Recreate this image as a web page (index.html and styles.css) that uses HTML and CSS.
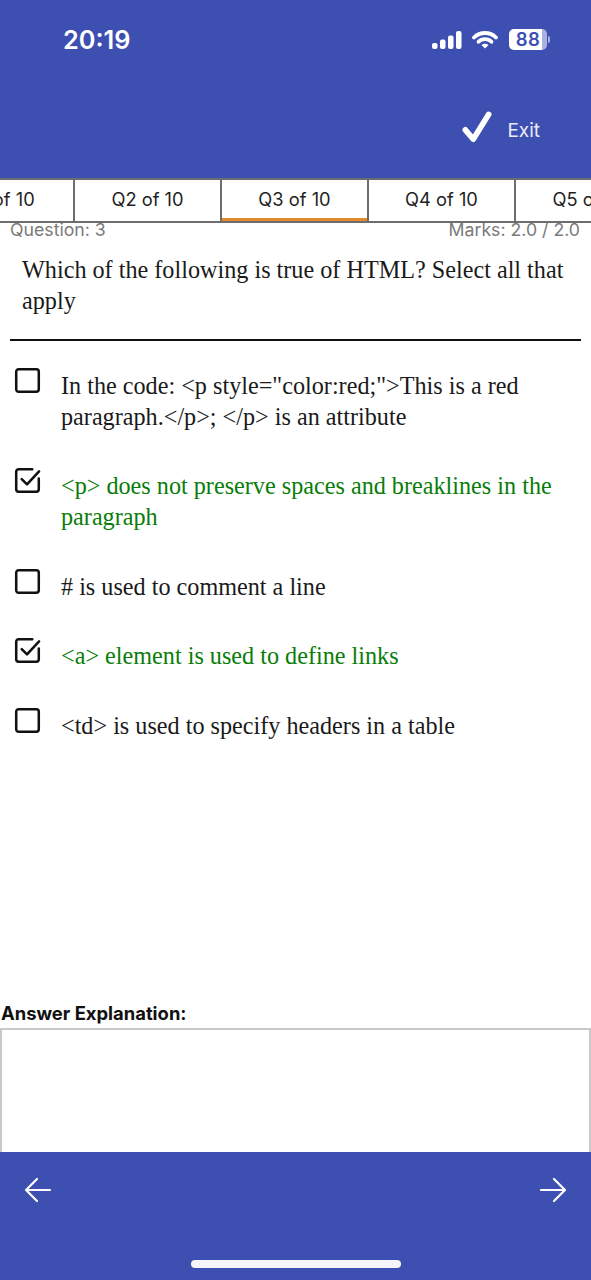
FILE: index.html
```html
<!DOCTYPE html>
<html lang="en">
<head>
<meta charset="utf-8">
<title>Quiz review</title>
<link rel="stylesheet" href="styles.css">
</head>
<body>
<div class="screen">
  <header class="header">
    <div class="status">
      <span class="time">20:19</span>
      <div class="status-icons">
        <svg class="signal" width="31" height="20" viewBox="0 0 31 20"><rect x="1" y="13" width="5.500" height="6" rx="2" fill="#fff"/><rect x="9" y="9.500" width="5.500" height="9.500" rx="2" fill="#fff"/><rect x="17" y="5.500" width="5.500" height="13.500" rx="2" fill="#fff"/><rect x="25" y="1" width="5.500" height="18" rx="2" fill="#fff"/></svg>
        <svg class="wifi" width="26" height="20" viewBox="0 0 26 20" fill="none" stroke="#fff" stroke-width="3.800" stroke-linecap="round"><path d="M2 7.500C8 1.500 18 1.500 24 7.500"/><path d="M6.500 11.800C10 8.200 16 8.200 19.500 11.800"/><path d="M13 18.500l-3.500-3.500c1.800-1.800 5.200-1.800 7 0z" fill="#fff" stroke="none"/></svg>
        <div class="battery"><span class="battery-level">88</span><span class="battery-cap"></span></div>
      </div>
    </div>
    <div class="actions">
      <svg class="check" width="30" height="34" viewBox="0 0 32 34" fill="none" stroke="#fff" stroke-width="6" stroke-linecap="round" stroke-linejoin="round"><path d="M3.500 20L12 30L28.500 3.500"/></svg>
      <span class="exit">Exit</span>
    </div>
  </header>

  <nav class="tabs">
    <div class="tab">Q1 of 10</div>
    <div class="tab">Q2 of 10</div>
    <div class="tab tab-active">Q3 of 10</div>
    <div class="tab">Q4 of 10</div>
    <div class="tab">Q5 of 10</div>
  </nav>

  <div class="meta">
    <span>Question: 3</span>
    <span>Marks: 2.0 / 2.0</span>
  </div>

  <main class="question">
    <p class="prompt">Which of the following is true of HTML? Select all that apply</p>
    <hr class="rule">
    <ul class="options">
      <li class="option">
        <svg class="box" width="27" height="27" viewBox="0 0 28 28" fill="none" stroke="#111" stroke-width="2.600" stroke-linejoin="round"><rect x="2.300" y="2.300" width="23.400" height="23.400" rx="2.500"/></svg>
        <span class="option-text">In the code: &lt;p style="color:red;"&gt;This is a red paragraph.&lt;/p&gt;; &lt;/p&gt; is an attribute</span>
      </li>
      <li class="option">
        <svg class="box" width="27" height="27" viewBox="0 0 28 28" fill="none" stroke="#111" stroke-width="2.600" stroke-linecap="round" stroke-linejoin="round"><path d="M19 2.300H4.800a2.500 2.500 0 0 0-2.500 2.500v18.400a2.500 2.500 0 0 0 2.500 2.500h18.400a2.500 2.500 0 0 0 2.500-2.500V12"/><path d="M8 12.500l5.500 5.500L26 4.500"/></svg>
        <span class="option-text correct">&lt;p&gt; does not preserve spaces and breaklines in the paragraph</span>
      </li>
      <li class="option">
        <svg class="box" width="27" height="27" viewBox="0 0 28 28" fill="none" stroke="#111" stroke-width="2.600" stroke-linejoin="round"><rect x="2.300" y="2.300" width="23.400" height="23.400" rx="2.500"/></svg>
        <span class="option-text"># is used to comment a line</span>
      </li>
      <li class="option">
        <svg class="box" width="27" height="27" viewBox="0 0 28 28" fill="none" stroke="#111" stroke-width="2.600" stroke-linecap="round" stroke-linejoin="round"><path d="M19 2.300H4.800a2.500 2.500 0 0 0-2.500 2.500v18.400a2.500 2.500 0 0 0 2.500 2.500h18.400a2.500 2.500 0 0 0 2.500-2.500V12"/><path d="M8 12.500l5.500 5.500L26 4.500"/></svg>
        <span class="option-text correct">&lt;a&gt; element is used to define links</span>
      </li>
      <li class="option">
        <svg class="box" width="27" height="27" viewBox="0 0 28 28" fill="none" stroke="#111" stroke-width="2.600" stroke-linejoin="round"><rect x="2.300" y="2.300" width="23.400" height="23.400" rx="2.500"/></svg>
        <span class="option-text">&lt;td&gt; is used to specify headers in a table</span>
      </li>
    </ul>
  </main>

  <section class="explanation">
    <div class="explanation-label">Answer Explanation:</div>
    <div class="explanation-box"></div>
  </section>

  <footer class="footer">
    <div class="arrows">
      <svg width="28" height="26" viewBox="0 0 28 26" fill="none" stroke="#fff" stroke-width="2.200" stroke-linecap="round" stroke-linejoin="round"><path d="M26 13H2M13 2L2 13l11 11"/></svg>
      <svg width="28" height="26" viewBox="0 0 28 26" fill="none" stroke="#fff" stroke-width="2.200" stroke-linecap="round" stroke-linejoin="round"><path d="M2 13h24M15 2l11 11-11 11"/></svg>
    </div>
    <div class="home-bar"></div>
  </footer>
</div>
</body>
</html>
```
FILE: styles.css
```css
* { box-sizing: border-box; }
html, body { margin: 0; padding: 0; background: #fff; }
.screen {
  width: 591px;
  height: 1280px;
  display: flex;
  flex-direction: column;
  overflow: hidden;
  font-family: Inter, "Liberation Sans", sans-serif;
}
.header {
  height: 178px;
  flex: none;
  background: #3d50b2;
  color: #fff;
  display: flex;
  flex-direction: column;
}
.status {
  display: flex;
  align-items: center;
  justify-content: space-between;
  padding: 22px 41px 0 63px;
  height: 57px;
}
.time { font-size: 25.3px; font-weight: 600; line-height: 34px; }
.status-icons { display: flex; align-items: center; gap: 10px; }
.battery { display: flex; align-items: center; gap: 1px; margin-left: 1px; }
.battery-level {
  width: 38px;
  height: 21px;
  border-radius: 5px;
  background: linear-gradient(to right, #fff 88%, #a9b2de 88%);
  color: #3d50b2;
  font-size: 18.5px;
  font-weight: 600;
  line-height: 21px;
  text-align: center;
  letter-spacing: 0.5px;
}
.battery-cap {
  width: 2px;
  height: 7px;
  background: #a9b2de;
  border-radius: 0 2px 2px 0;
}
.actions {
  display: flex;
  align-items: center;
  justify-content: flex-end;
  gap: 15px;
  padding: 57px 51px 0 0;
}
.check { margin-top: -8px; }
.exit { font-size: 19px; color: #e9ebf8; line-height: 34px; }
.tabs {
  flex: none;
  display: flex;
  height: 45px;
  margin-left: -72px;
  border-top: 2px solid #6d6d6d;
  border-bottom: 2px solid #6d6d6d;
  background: #fff;
  position: relative;
  z-index: 1;
}
.tab {
  flex: 0 0 147px;
  display: flex;
  align-items: center;
  justify-content: center;
  border-right: 2px solid #6d6d6d;
  font-size: 18.3px;
  color: #1f1f1f;
  padding-bottom: 3px;
  position: relative;
}
.tab-active::after {
  content: "";
  position: absolute;
  left: 0;
  right: 0;
  bottom: 0;
  height: 3px;
  background: #e58a2c;
}
.meta {
  flex: none;
  display: flex;
  justify-content: space-between;
  padding: 0 11px 0 10px;
  margin-top: -3px;
  height: 20px;
  font-size: 17.7px;
  line-height: 20px;
  color: #7a7a7a;
}
.question { flex: 1; min-height: 0; }
.prompt {
  margin: 15px 0 0;
  padding: 0 22px;
  font-family: "Liberation Serif", serif;
  font-size: 24.2px;
  line-height: 30.5px;
  color: #1a1a1a;
}
.rule {
  margin: 23px 10px 0;
  border: 0;
  height: 2px;
  background: #111;
}
.options { list-style: none; margin: 0; padding: 24px 0 0 14px; }
.option {
  display: flex;
  gap: 20px;
  margin-bottom: 39.3px;
}
.box { flex: none; margin-top: 2px; }
.option-text {
  font-family: "Liberation Serif", serif;
  font-size: 24.2px;
  line-height: 30.5px;
  color: #1a1a1a;
  padding-top: 6px;
  margin-bottom: -6px;
  max-width: 500px;
}
.correct { color: #087d08; }
.explanation { flex: none; }
.explanation-label {
  font-size: 18.4px;
  font-weight: 700;
  line-height: 22px;
  padding-left: 1px;
  color: #111;
  margin-bottom: 4px;
}
.explanation-box {
  height: 124px;
  border: 2px solid #c9c9c9;
  border-bottom: 0;
}
.footer {
  flex: none;
  height: 128px;
  background: #3d50b2;
  display: flex;
  flex-direction: column;
  align-items: center;
}
.arrows {
  width: 100%;
  display: flex;
  justify-content: space-between;
  padding: 25px 24px 0;
}
.home-bar {
  width: 210px;
  height: 8px;
  margin-top: 57px;
  border-radius: 4px;
  background: #f4f5fb;
}
```
